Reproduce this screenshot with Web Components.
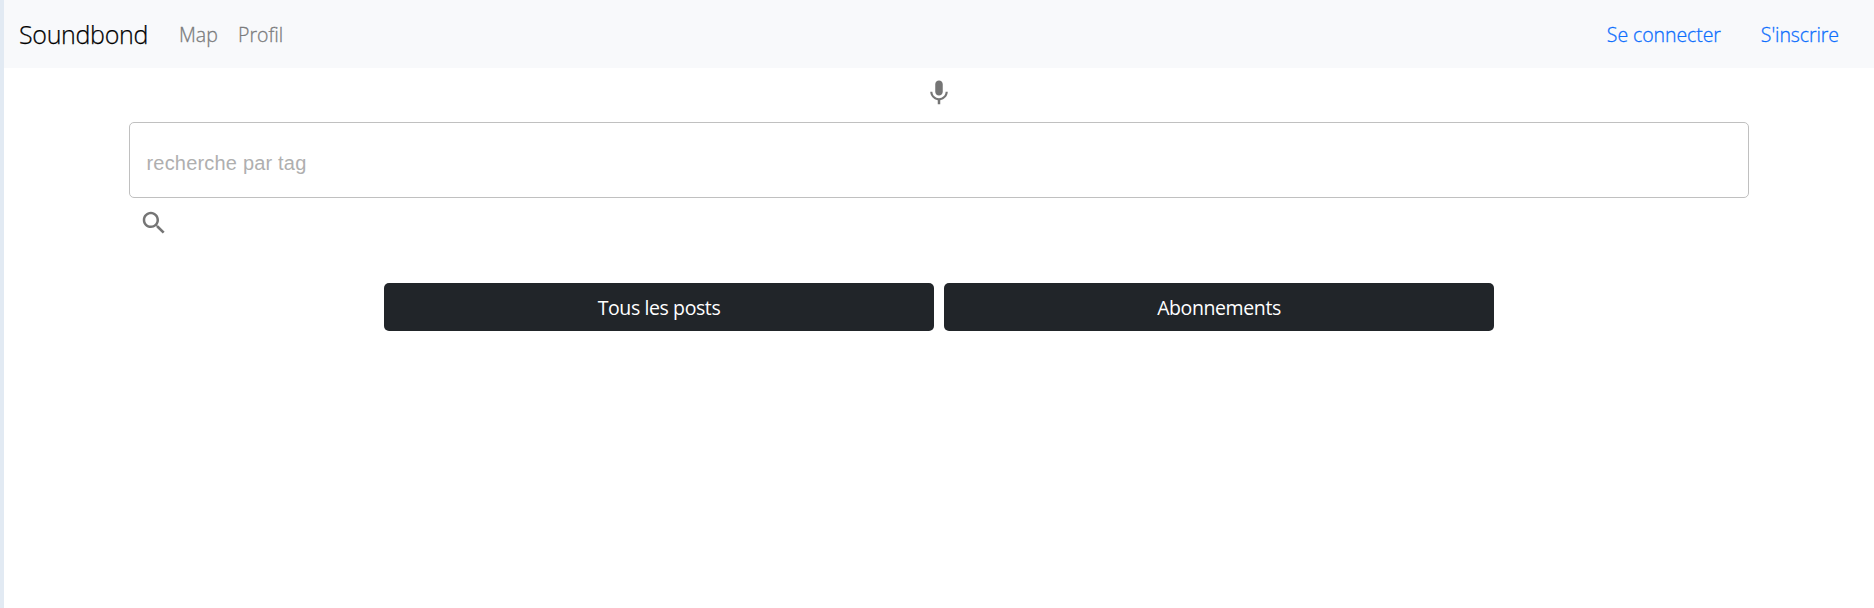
<!DOCTYPE html>
<html lang="fr">
<head>
<meta charset="utf-8">
<title>Soundbond</title>
<style>
html, body { margin: 0; height: 100%; background: #fff; }
body { box-sizing: border-box; height: 608px; border-left: 4px solid #e2eaf3; overflow: hidden; font: 20px/30px "Open Sans", "Noto Sans", sans-serif; color: #212529; }
</style>
</head>
<body>
<sb-app></sb-app>
<script>
const define = (name, html, setup) => customElements.define(name, class extends HTMLElement {
  constructor() {
    super();
    this.attachShadow({ mode: 'open' }).innerHTML = html;
  }
  connectedCallback() { if (setup) setup(this); }
});

define('sb-link', `
<style>
:host { display: block; font-size: 19.5px; line-height: 30px; color: var(--link, #7b7c7d); white-space: nowrap; }
a { color: inherit; text-decoration: none; -webkit-text-stroke: .3px currentColor; }
</style><a href="#"><slot></slot></a>`);

define('sb-navbar', `
<style>
:host { display: flex; align-items: center; height: 68px; padding: 0 35px 0 15px; box-sizing: border-box; background: #f8f9fb; font-weight: 300; }
.brand { font-size: 25px; line-height: 38px; letter-spacing: -.32px; color: #000; width: 160px; white-space: nowrap; -webkit-text-stroke: .25px #000; }
.links { display: flex; flex: 1; padding-top: 1px; }
.map { width: 59px; }
.account { display: flex; gap: 40px; --link: #0d6efd; letter-spacing: -.08px; padding-top: 1px; }
</style>
<div class="brand">Soundbond</div>
<div class="links"><sb-link class="map">Map</sb-link><sb-link class="profil">Profil</sb-link></div>
<div class="account"><sb-link class="login">Se connecter</sb-link><sb-link class="join">S'inscrire</sb-link></div>`);

const icons = {
  mic: 'M12 14c1.66 0 2.99-1.34 2.99-3L15 5c0-1.66-1.34-3-3-3S9 3.34 9 5v6c0 1.66 1.34 3 3 3zm5.3-3c0 3-2.54 5.1-5.3 5.1S6.7 14 6.7 11H5c0 3.41 2.72 6.23 6 6.72V21h2v-3.28c3.28-.48 6-3.3 6-6.72h-1.7z',
  search: 'M15.5 14h-.79l-.28-.27C15.41 12.59 16 11.11 16 9.5 16 5.91 13.09 3 9.5 3S3 5.91 3 9.5 5.91 16 9.5 16c1.61 0 3.09-.59 4.23-1.57l.27.28v.79l5 4.99L20.49 19l-4.99-5zm-6 0C7.01 14 5 11.99 5 9.5S7.01 5 9.5 5 14 7.01 14 9.5 11.99 14 9.5 14z'
};
define('sb-icon', `
<style>:host { display: block; width: 30px; height: 30px; } svg { display: block; fill: #757575; }</style>
<svg width="30" height="30" viewBox="0 0 24 24"><path/></svg>`,
  el => el.shadowRoot.querySelector('path').setAttribute('d', icons[el.getAttribute('name')]));

define('sb-field', `
<style>
:host { display: block; }
input { display: block; box-sizing: border-box; width: 100%; height: 76px; margin: 0; padding: 6px 16.5px 0; border: 1px solid #c0c0c0; border-radius: 5px; background: #fff; outline: 0; font: 20px "Liberation Sans", Arial, sans-serif; letter-spacing: .19px; }
input::placeholder { color: #afafaf; opacity: 1; }
</style><input type="text" placeholder="recherche par tag">`);

define('sb-button', `
<style>
:host { display: block; flex: 1; }
button { display: block; width: 100%; height: 48px; margin: 0; padding: 2px 0 0; border: 0; border-radius: 5px; background: #212529; color: #fff; font: 400 19.5px/30px "Open Sans", "Noto Sans", sans-serif; letter-spacing: -.4px; }
</style><button type="button"><slot></slot></button>`);

define('sb-app', `
<style>
:host { display: block; }
main { display: flex; flex-direction: column; padding: 10px 125px 0; }
.mic { align-self: center; }
.field { margin-top: 14px; }
.search { margin: 10px 0 0 10px; }
.tabs { display: flex; gap: 10px; margin: 45px 255px 0 255px; }
</style>
<sb-navbar></sb-navbar>
<main>
<sb-icon class="mic" name="mic"></sb-icon>
<sb-field class="field"></sb-field>
<sb-icon class="search" name="search"></sb-icon>
<div class="tabs"><sb-button class="posts">Tous les posts</sb-button><sb-button class="subs">Abonnements</sb-button></div>
</main>`);
</script>
</body>
</html>
